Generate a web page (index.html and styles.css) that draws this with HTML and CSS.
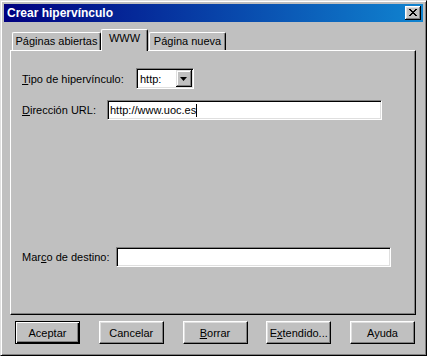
FILE: index.html
```html
<!DOCTYPE html>
<html lang="es">
<head>
<meta charset="utf-8">
<title>Crear hipervínculo</title>
<link rel="stylesheet" href="styles.css">
</head>
<body>
<div class="window">
  <div class="titlebar">
    <span class="title">Crear hipervínculo</span>
    <span class="close">
      <svg width="8" height="7" viewBox="0 0 8 7"><path d="M0 0h2v1h1v1h2v-1h1v-1h2v1h-1v1h-1v1h-1v1h1v1h1v1h1v1h-2v-1h-1v-1h-2v1h-1v1h-2v-1h1v-1h1v-1h1v-1h-1v-1h-1v-1h-1z" fill="#000"/></svg>
    </span>
  </div>
  <div class="body">
    <div class="tabs">
      <div class="tab tab-open">Páginas abiertas</div>
      <div class="tab tab-www active">WWW</div>
      <div class="tab tab-new">Página nueva</div>
    </div>
    <div class="panel">
      <div class="row">
        <span class="lbl lbl-tipo"><u>T</u>ipo de hipervínculo:</span>
        <div class="select">
          <span class="select-value">http:</span>
          <span class="select-btn"><svg width="7" height="4" viewBox="0 0 7 4"><path d="M0 0h7l-3.5 4z" fill="#000"/></svg></span>
        </div>
      </div>
      <div class="row row-url">
        <span class="lbl lbl-url"><u>D</u>irección URL:</span>
        <div class="field"><span class="field-text">http://www.uoc.es</span><span class="caret"></span></div>
      </div>
      <div class="row row-marco">
        <span class="lbl lbl-marco">Mar<u>c</u>o de destino:</span>
        <div class="field"></div>
      </div>
    </div>
    <div class="buttons">
      <span class="btn default">Aceptar</span>
      <span class="btn">Cancelar</span>
      <span class="btn"><u>B</u>orrar</span>
      <span class="btn">E<u>x</u>tendido...</span>
      <span class="btn">Ayuda</span>
    </div>
  </div>
</div>
</body>
</html>
```
FILE: styles.css
```css
* { box-sizing: border-box; }
html, body { margin: 0; padding: 0; }
body {
  width: 427px;
  height: 356px;
  overflow: hidden;
  background: #c0c0c0;
  font-family: "Liberation Sans", Arial, sans-serif;
  font-size: 11px;
  color: #000;
}
.window {
  width: 427px;
  height: 356px;
  background: #c0c0c0;
  border: 1px solid;
  border-color: #dfdfdf #000 #000 #dfdfdf;
  box-shadow: inset 1px 1px #fff, inset -1px -1px #808080;
  padding: 3px;
  display: flex;
  flex-direction: column;
}
.titlebar {
  height: 18px;
  flex: none;
  background: linear-gradient(to right, #000080, #1084d0);
  display: flex;
  align-items: center;
  justify-content: space-between;
  padding: 0 2px 0 3px;
}
.title {
  color: #fff;
  font-weight: bold;
  font-size: 12px;
}
.close {
  width: 16px;
  height: 14px;
  background: #c0c0c0;
  box-shadow: inset -1px -1px #000, inset 1px 1px #fff, inset -2px -2px #808080, inset 2px 2px #dfdfdf;
  display: flex;
  align-items: center;
  justify-content: center;
  padding: 0 1px 1px 0;
}
.close svg { display: block; }
.body {
  flex: 1;
  display: flex;
  flex-direction: column;
  padding: 7px 7px 0 6px;
}
.tabs {
  display: flex;
  align-items: flex-end;
  height: 21px;
  padding-left: 2px;
  flex: none;
}
.tab {
  height: 18px;
  border: 1px solid;
  border-color: #fff #000 transparent #fff;
  border-bottom: none;
  border-radius: 2px 2px 0 0;
  box-shadow: inset -1px 0 #808080;
  display: flex;
  align-items: center;
  justify-content: center;
  white-space: nowrap;
  padding-bottom: 1px;
}
.tab-open { width: 89px; }
.tab-www { width: 47px; }
.tab-new { width: 77px; margin-left: 1px; }
.tab.active {
  height: 22px;
  margin-bottom: -1px;
  position: relative;
  z-index: 1;
  background: #c0c0c0;
  padding-bottom: 6px;
}
.panel {
  height: 265px;
  flex: none;
  border: 1px solid;
  border-color: #fff #000 #000 #fff;
  box-shadow: inset -1px -1px #808080;
  border-bottom-width: 1px;
  padding: 17px 11px 47px 11px;
  display: flex;
  flex-direction: column;
}
.row {
  display: flex;
  align-items: center;
}
.row-url { margin-top: 11px; }
.row-marco { margin-top: auto; }
.lbl { white-space: nowrap; flex: none; }
.lbl-tipo { width: 114px; }
.lbl-url { width: 85px; }
.lbl-marco { width: 94px; }
.select {
  width: 58px;
  height: 21px;
  background: #fff;
  border: 1px solid;
  border-color: #808080 #fff #fff #808080;
  box-shadow: inset 1px 1px #000, inset -1px -1px #dfdfdf;
  padding: 1px;
  display: flex;
  align-items: stretch;
}
.select-value {
  flex: 1;
  padding-left: 2px;
  display: flex;
  align-items: center;
}
.select-btn {
  width: 16px;
  background: #c0c0c0;
  box-shadow: inset -1px -1px #000, inset 1px 1px #dfdfdf, inset -2px -2px #808080, inset 2px 2px #fff;
  display: flex;
  align-items: center;
  justify-content: center;
  padding: 0 1px 0 0;
}
.select-btn svg { display: block; }
.field {
  width: 275px;
  height: 20px;
  background: #fff;
  border: 1px solid;
  border-color: #808080 #fff #fff #808080;
  box-shadow: inset 1px 1px #000, inset -1px -1px #dfdfdf;
  padding: 0 2px;
  display: flex;
  align-items: center;
}
.caret {
  width: 1px;
  height: 13px;
  background: #000;
}
.buttons {
  flex: none;
  margin-top: 6px;
  padding: 0 1px 0 5px;
  display: flex;
  justify-content: space-between;
}
.btn {
  width: 65px;
  height: 23px;
  border: 1px solid;
  border-color: #fff #000 #000 #fff;
  box-shadow: inset -1px -1px #808080, inset 1px 1px #dfdfdf;
  display: flex;
  align-items: center;
  justify-content: center;
  white-space: nowrap;
}
.btn.default {
  border-color: #000;
  box-shadow: inset 1px 1px #fff, inset -1px -1px #000, inset -2px -2px #808080;
}
```
